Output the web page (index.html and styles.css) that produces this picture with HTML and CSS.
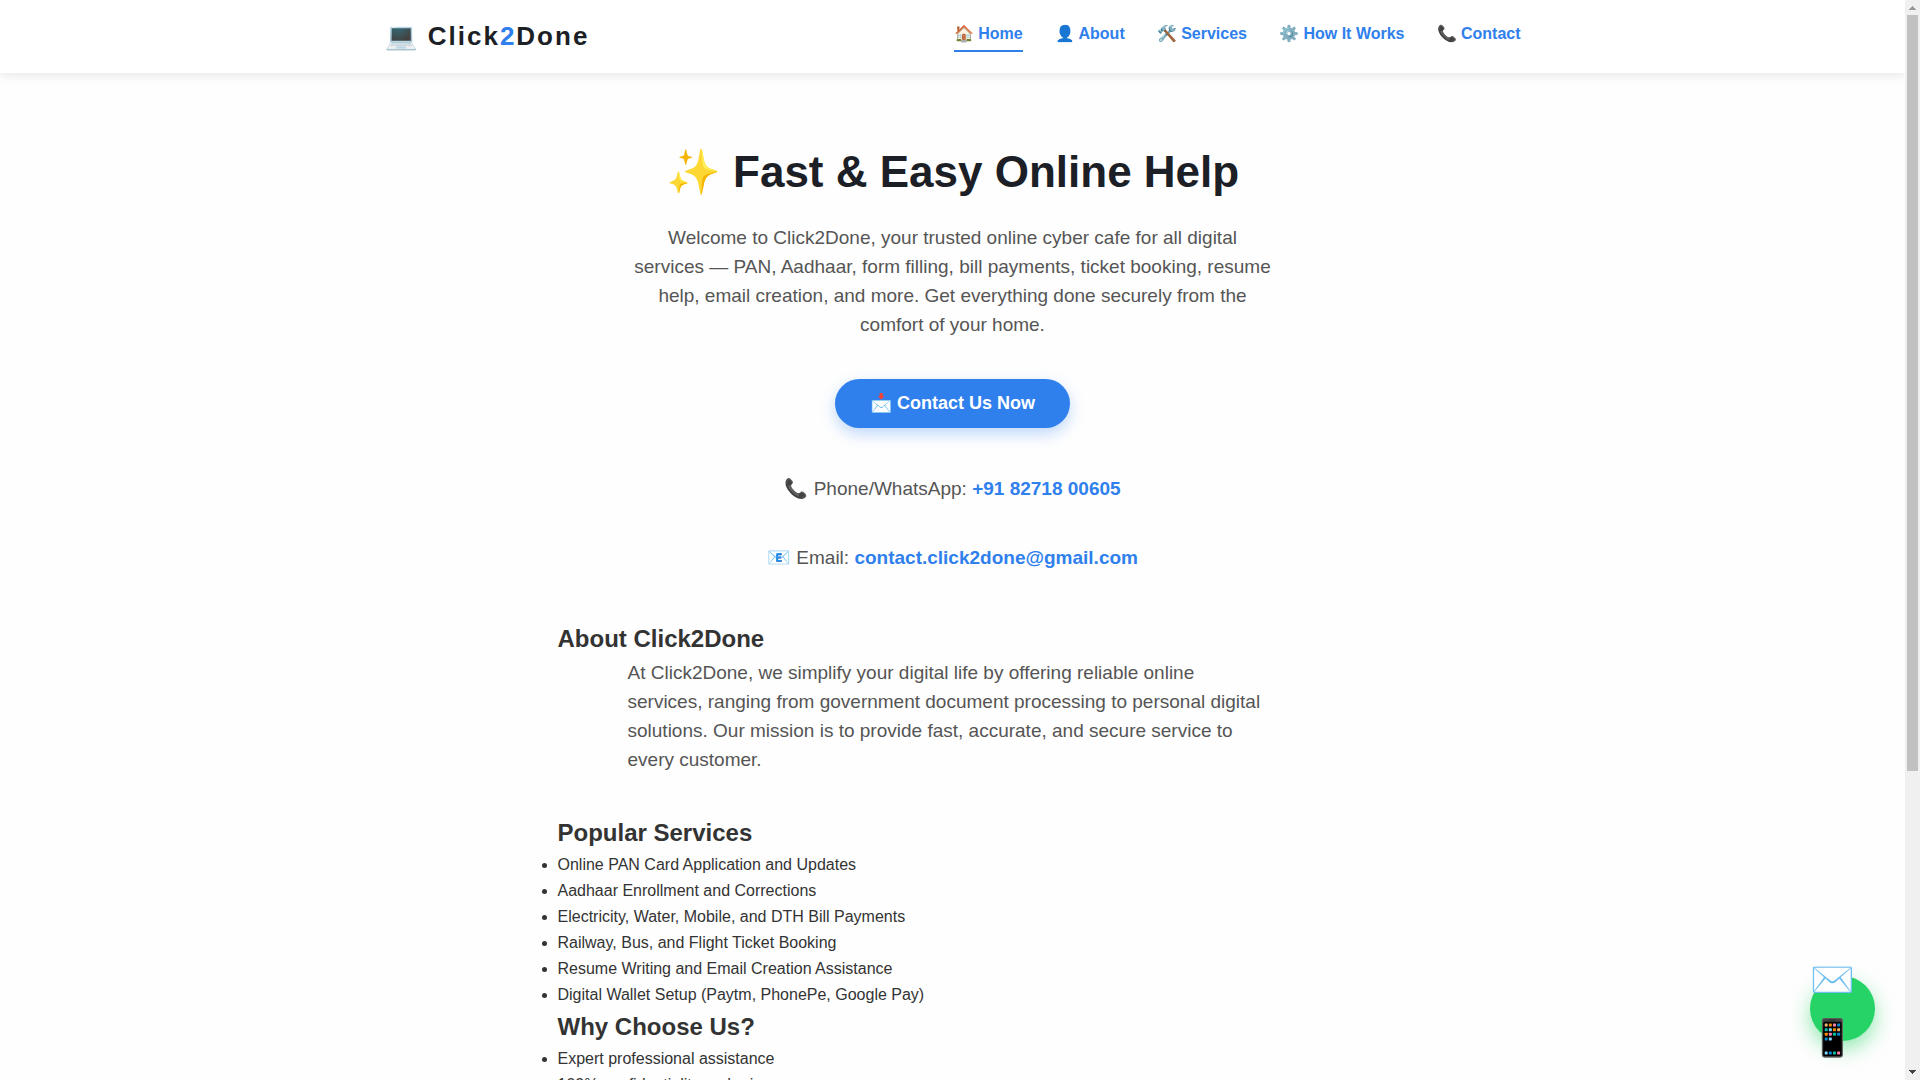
FILE: index.html
```html
<!DOCTYPE html>
<html lang="en">
<head>
  <meta charset="utf-8">
  <meta name="viewport" content="width=device-width, initial-scale=1">
  <title>Click2Done</title>
  <link rel="stylesheet" href="styles.css">
</head>
<body>
  <header class="site-header">
    <div class="header-inner">
      <div class="logo">💻 Click<span class="logo-accent">2</span>Done</div>
      <nav class="nav">
        <a class="nav-link active" href="#home">🏠 Home</a>
        <a class="nav-link" href="#about">👤 About</a>
        <a class="nav-link" href="#services">🛠️ Services</a>
        <a class="nav-link" href="#how">⚙️ How It Works</a>
        <a class="nav-link" href="#contact">📞 Contact</a>
      </nav>
    </div>
  </header>

  <main class="main" id="home">
    <section class="hero">
      <h1 class="hero-title">✨ Fast &amp; Easy Online Help</h1>
      <p class="text lead">Welcome to Click2Done, your trusted online cyber cafe for all digital services — PAN, Aadhaar, form filling, bill payments, ticket booking, resume help, email creation, and more. Get everything done securely from the comfort of your home.</p>
      <button class="cta" type="button">📩 Contact Us Now</button>
      <p class="text">📞 Phone/WhatsApp: <a class="contact-link" href="tel:+918271800605">+91 82718 00605</a></p>
      <p class="text">📧 Email: <a class="contact-link" href="mailto:contact.click2done@gmail.com">contact.click2done@gmail.com</a></p>
    </section>

    <section id="about">
      <h2 class="heading">About Click2Done</h2>
      <p class="text about-text">At Click2Done, we simplify your digital life by offering reliable online services, ranging from government document processing to personal digital solutions. Our mission is to provide fast, accurate, and secure service to every customer.</p>
    </section>

    <section id="services">
      <h2 class="heading">Popular Services</h2>
      <ul class="list">
        <li>Online PAN Card Application and Updates</li>
        <li>Aadhaar Enrollment and Corrections</li>
        <li>Electricity, Water, Mobile, and DTH Bill Payments</li>
        <li>Railway, Bus, and Flight Ticket Booking</li>
        <li>Resume Writing and Email Creation Assistance</li>
        <li>Digital Wallet Setup (Paytm, PhonePe, Google Pay)</li>
      </ul>
    </section>

    <section>
      <h2 class="heading">Why Choose Us?</h2>
      <ul class="list">
        <li>Expert professional assistance</li>
        <li>100% confidentiality and privacy</li>
      </ul>
    </section>
  </main>

  <a class="fab" href="#contact" aria-label="Message us"><span>✉️</span><span>📱</span></a>

  <div class="scrollbar" aria-hidden="true">
    <svg class="scroll-arrow" viewBox="0 0 15 15"><path d="M7 6h1v1h1v1h1v1h1v1H4V9h1V8h1V7h1z" fill="#999"/></svg>
    <div class="scroll-track"><div class="scroll-thumb"></div></div>
    <svg class="scroll-arrow" viewBox="0 0 15 15"><path d="M4 5h7v1h-1v1H9v1H8v1H7V8H6V7H5V6H4z" fill="#444"/></svg>
  </div>
</body>
</html>
```

FILE: styles.css
```css
* {
  box-sizing: border-box;
  margin: 0;
  padding: 0;
}

html {
  scrollbar-width: none;
}

body {
  padding-right: 15px;
  background: #fefefe;
  color: #333;
  font: 16px/26px "Liberation Sans", Arial, sans-serif;
}

a {
  color: #2f80ed;
  text-decoration: none;
}

.site-header {
  position: sticky;
  top: 0;
  z-index: 10;
  background: #fff;
  box-shadow: 0 2px 10px rgba(0, 0, 0, 0.1);
}

.header-inner {
  display: flex;
  align-items: center;
  justify-content: space-between;
  max-width: 1200px;
  margin: 0 auto;
  padding: 16px 32px;
}

.logo {
  color: #1c1f26;
  font-size: 26px;
  font-weight: 700;
  line-height: 41px;
  letter-spacing: 2px;
}

.logo-accent {
  color: #2f80ed;
}

.nav {
  display: flex;
  gap: 32px;
}

.nav-link {
  padding-bottom: 3px;
  border-bottom: 2px solid transparent;
  font-weight: 600;
}

.nav-link.active {
  border-bottom-color: #2f80ed;
}

.main {
  max-width: 854px;
  margin: 0 auto;
  padding: 64px 32px 400px;
}

.hero {
  margin-bottom: 48px;
  text-align: center;
}

.hero-title {
  margin-bottom: 16px;
  color: #1c1f26;
  font-size: 44px;
  line-height: 70px;
}

.text {
  max-width: 650px;
  margin: 0 auto 40px;
  color: #555;
  font-size: 19px;
  line-height: 29px;
}

.lead {
  max-width: 640px;
}

.about-text {
  padding-right: 10px;
}

.cta {
  display: block;
  margin: 0 auto 46px;
  padding: 10px 35px;
  border: 0;
  border-radius: 50px;
  background: #2f80ed;
  box-shadow: 0 6px 15px rgba(47, 128, 237, 0.3);
  color: #fff;
  font: 700 18px/29px "Liberation Sans", Arial, sans-serif;
  cursor: pointer;
}

.contact-link {
  font-weight: 700;
}

.heading {
  font-size: 24px;
  line-height: 38px;
}

.fab {
  position: fixed;
  right: 45px;
  bottom: 39px;
  z-index: 20;
  display: flex;
  flex-direction: column;
  justify-content: center;
  width: 65px;
  height: 65px;
  border-radius: 50%;
  background: #25d366;
  box-shadow: 0 8px 20px rgba(37, 211, 102, 0.5);
  font-size: 36px;
  line-height: 58px;
}

.scrollbar {
  position: fixed;
  top: 0;
  right: 0;
  bottom: 0;
  z-index: 30;
  display: flex;
  flex-direction: column;
  width: 15px;
  background: #f0f0f0;
}

.scroll-arrow {
  width: 15px;
  height: 15px;
}

.scroll-track {
  flex: 1;
  padding: 0 2px;
}

.scroll-thumb {
  height: 72%;
  background: #c1c1c1;
}
```
